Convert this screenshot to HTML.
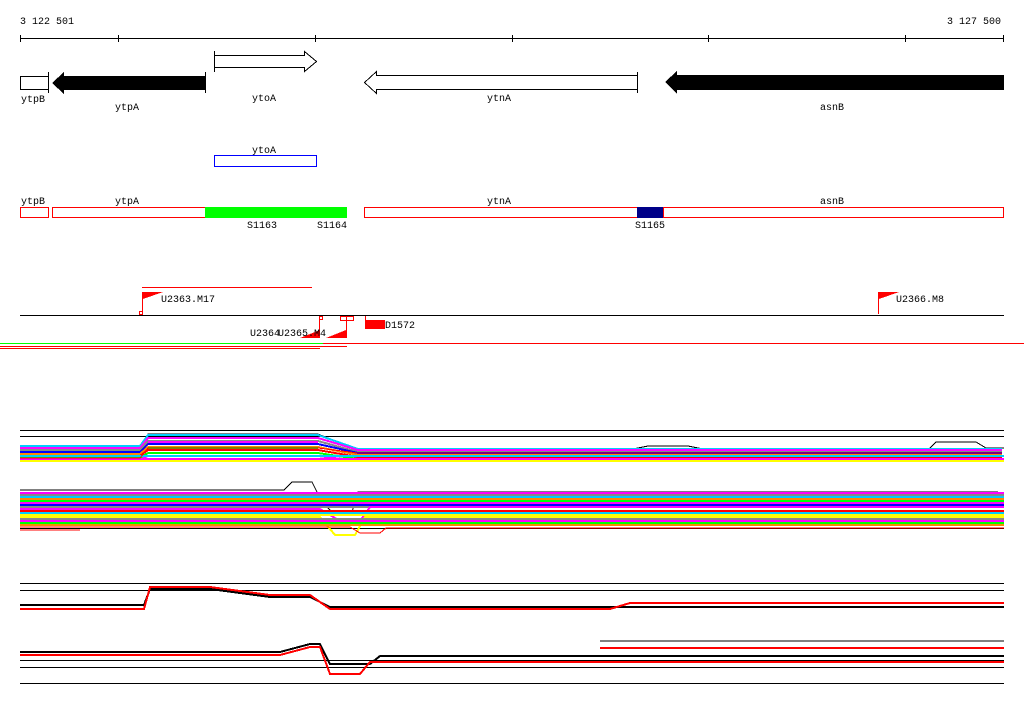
<!DOCTYPE html>
<html><head><style>
body{margin:0;background:#fff;width:1024px;height:714px;overflow:hidden}
svg text{font-family:"Liberation Mono","DejaVu Sans Mono",monospace;font-size:10px;fill:#000}
</style></head><body>
<svg width="1024" height="714" viewBox="0 0 1024 714" shape-rendering="crispEdges">
<text x="20" y="24">3 122 501</text>
<text x="947" y="24">3 127 500</text>
<g stroke="#000" fill="none">
<line x1="20" y1="38.5" x2="1004" y2="38.5"/>
<path d="M20.5 35v7M118.5 35v7M315.5 35v7M512.5 35v7M708.5 35v7M905.5 35v7M1003.5 35v7"/>
<rect x="20.5" y="76.5" width="28" height="13"/>
<path d="M48.5 72v21M205.5 72v21M214.5 51v21M637.5 72v21"/>
<path d="M214.5 55.5h90v-4l12 10-12 10v-4h-90z"/>
<path d="M637.5 75.5h-261v-4l-12 11 12 11v-4h261z"/>
</g>
<path d="M52 83l12-11v4h141v14h-141v4z" fill="#000"/>
<path d="M665 82l12-11v4h327v15h-327v4z" fill="#000"/>
<text x="21" y="102">ytpB</text><text x="115" y="110">ytpA</text>
<text x="252" y="101">ytoA</text><text x="487" y="101">ytnA</text><text x="820" y="110">asnB</text>
<text x="252" y="153">ytoA</text>
<rect x="214.5" y="155.5" width="102" height="11" fill="none" stroke="#00f"/>
<text x="21" y="204">ytpB</text><text x="115" y="204">ytpA</text><text x="487" y="204">ytnA</text><text x="820" y="204">asnB</text>
<g fill="none" stroke="#f00">
<rect x="20.5" y="207.5" width="28" height="10"/>
<rect x="52.5" y="207.5" width="153" height="10"/>
<rect x="364.5" y="207.5" width="273" height="10"/>
<rect x="663.5" y="207.5" width="340" height="10"/>
</g>
<rect x="205" y="207" width="142" height="11" fill="#0f0"/>
<rect x="637" y="207" width="26" height="11" fill="#008"/>
<text x="247" y="228">S1163</text><text x="317" y="228">S1164</text><text x="635" y="228">S1165</text>
<line x1="142" y1="287.5" x2="312" y2="287.5" stroke="#f00"/>
<line x1="20" y1="315.5" x2="1004" y2="315.5" stroke="#000"/>
<g stroke="#f00" fill="none">
<path d="M142.5 292v22M878.5 292v22M319.5 316v22M346.5 316v22M365.5 316v4"/>
<rect x="139.5" y="311.5" width="3" height="3"/>
<rect x="319.5" y="316.5" width="3" height="3"/>
<rect x="340.5" y="316.5" width="13" height="4"/>
</g>
<g fill="#f00">
<path d="M143 292h20l-20 7z"/><path d="M879 292h20l-20 7z"/>
<path d="M300 338l20-8v8z"/><path d="M326 338l20-8v8z"/>
<rect x="365" y="320" width="20" height="9"/>
</g>
<text x="161" y="302">U2363.M17</text><text x="896" y="302">U2366.M8</text>
<text x="250" y="336">U2364</text><text x="278" y="336">U2365.M4</text>
<text x="385" y="328">D1572</text>
<line x1="0" y1="343.5" x2="323" y2="343.5" stroke="#0f0"/>
<line x1="323" y1="343.5" x2="1024" y2="343.5" stroke="#f00"/>
<line x1="0" y1="346.5" x2="347" y2="346.5" stroke="#f00"/>
<line x1="0" y1="348.5" x2="320" y2="348.5" stroke="#f00"/>
<g stroke="#000" fill="none">
<path d="M20 430.5h984M20 436.5h984M20 528.5h984M20 583.5h984M20 590.5h984M20 660.5h984M20 667.5h984M20 683.5h984"/>
</g>
<g fill="none" stroke-width="2">
<path d="M20 451h120l8-17h170l40 16h270l20-4h40l20 4h220l8-8h40l10 6h18" stroke="#000" stroke-width="1"/>
<path d="M20 446h120l8-11h170l40 14h644" stroke="#0cf"/>
<path d="M20 448h120l8-10h170l40 12h644" stroke="#f0f"/>
<path d="M20 450h120l8-9h170l40 11h644" stroke="#888"/>
<path d="M20 452h120l8-8h170l40 9h644" stroke="#00f"/>
<path d="M20 454h120l8-7h170l40 8h644" stroke="#f80"/>
<path d="M20 456h120l8-6h170l40 7h644" stroke="#f00"/>
<path d="M20 458h120l8-5h170l40 6h644" stroke="#0f0"/>
<path d="M20 460h120l8-4h170l40 5h644" stroke="#f0f"/>
<path d="M148 448h170" stroke="#0f0"/>
<path d="M148 442h170" stroke="#f0f"/>
<path d="M20 461h984" stroke="#ff0"/>
<path d="M20 456h984" stroke="#0cf"/>
<path d="M20 459h984" stroke="#f0f"/>
<path d="M20 458h120l8-10h170l40 5h644" stroke="#f00" stroke-width="1"/>
</g>
<g fill="none" stroke-width="2">
<path d="M20 490h264l8-8h20l10 20 10 10h20l6-20h640" stroke="#000" stroke-width="1"/>
<path d="M20 493h984" stroke="#f0f"/>
<path d="M20 495h984" stroke="#888"/>
<path d="M20 497h984" stroke="#0cf"/>
<path d="M20 499h984" stroke="#f80"/>
<path d="M20 501h984" stroke="#0f0"/>
<path d="M20 503h984" stroke="#f0f"/>
<path d="M20 505h984" stroke="#00f"/>
<path d="M20 507h984" stroke="#888"/>
<path d="M20 509h300l20 12h20l10-14h634" stroke="#f0f"/>
<path d="M20 511h984" stroke="#f00"/>
<path d="M20 513h984" stroke="#0cf"/>
<path d="M20 515h984" stroke="#ff0"/>
<path d="M20 517h300l15 18h20l10-18h639" stroke="#ff0"/>
<path d="M20 519h984" stroke="#888"/>
<path d="M20 521h984" stroke="#f0f"/>
<path d="M20 523h984" stroke="#0f0"/>
<path d="M20 525h984" stroke="#f80"/>
<path d="M20 527h330l10 6h20l6-5h618" stroke="#f00" stroke-width="1"/>
<path d="M20 530h60" stroke="#f00" stroke-width="1"/>
</g>
<g fill="none">
<path d="M20 605h124l6-16h60l60 8h40l20 10h674" stroke="#000" stroke-width="2"/>
<path d="M20 609h124l6-22h60l60 8h40l20 14h280l20-6h374" stroke="#f00" stroke-width="2"/>
<path d="M20 652h260l30 -8h10l10 20h40l10-8h624" stroke="#000" stroke-width="2"/>
<path d="M20 655h260l30 -8h10l10 27h30l10-12h634" stroke="#f00" stroke-width="2"/>
<path d="M600 648h404" stroke="#f00" stroke-width="2"/>
<path d="M600 641h404" stroke="#000" stroke-width="1"/>
</g>
</svg>
</body></html>
